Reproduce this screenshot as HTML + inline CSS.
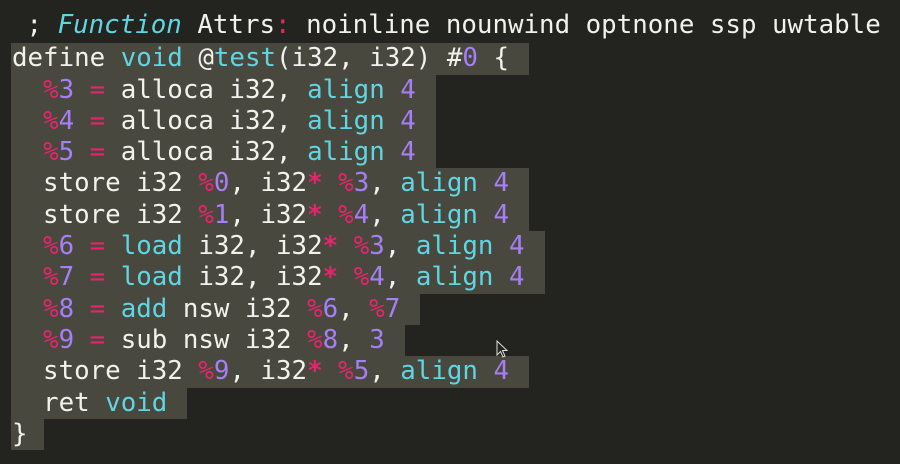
<!DOCTYPE html>
<html><head><style>
body{margin:0;width:900px;height:464px;background:#23231f;overflow:hidden;}
pre{margin:0;position:absolute;left:11px;top:10px;font-family:"DejaVu Sans Mono","Liberation Mono",monospace;font-size:25.8px;line-height:31.3px;color:#f2f2ec;}
.l{display:block;height:31.3px;}
.s{display:inline-block;height:31.3px;vertical-align:top;background:#48483f;padding:0 20px 0 1px;}
.c{color:#5fd6e2}.p{color:#e8246e}.v{color:#a67ff5}.i{font-style:italic}.b{font-weight:bold}
</style></head><body>
<pre><span class="l"> ; <span class="c i">Function</span> Attrs<span class="p">:</span> noinline nounwind optnone ssp uwtable</span><span class="l" style="margin-top:2px"><span class="s">define <span class="c">void</span> @<span class="c">test</span>(i32, i32) #<span class="v">0</span> {</span></span><span class="l"><span class="s">  <span class="p">%</span><span class="v">3</span> <span class="p">=</span> alloca i32, <span class="c">align</span> <span class="v">4</span></span></span><span class="l"><span class="s">  <span class="p">%</span><span class="v">4</span> <span class="p">=</span> alloca i32, <span class="c">align</span> <span class="v">4</span></span></span><span class="l"><span class="s">  <span class="p">%</span><span class="v">5</span> <span class="p">=</span> alloca i32, <span class="c">align</span> <span class="v">4</span></span></span><span class="l"><span class="s">  store i32 <span class="p">%</span><span class="v">0</span>, i32<span class="p b">*</span> <span class="p">%</span><span class="v">3</span>, <span class="c">align</span> <span class="v">4</span></span></span><span class="l"><span class="s">  store i32 <span class="p">%</span><span class="v">1</span>, i32<span class="p b">*</span> <span class="p">%</span><span class="v">4</span>, <span class="c">align</span> <span class="v">4</span></span></span><span class="l"><span class="s">  <span class="p">%</span><span class="v">6</span> <span class="p">=</span> <span class="c">load</span> i32, i32<span class="p b">*</span> <span class="p">%</span><span class="v">3</span>, <span class="c">align</span> <span class="v">4</span></span></span><span class="l"><span class="s">  <span class="p">%</span><span class="v">7</span> <span class="p">=</span> <span class="c">load</span> i32, i32<span class="p b">*</span> <span class="p">%</span><span class="v">4</span>, <span class="c">align</span> <span class="v">4</span></span></span><span class="l"><span class="s">  <span class="p">%</span><span class="v">8</span> <span class="p">=</span> <span class="c">add</span> nsw i32 <span class="p">%</span><span class="v">6</span>, <span class="p">%</span><span class="v">7</span></span></span><span class="l"><span class="s">  <span class="p">%</span><span class="v">9</span> <span class="p">=</span> sub nsw i32 <span class="p">%</span><span class="v">8</span>, <span class="v">3</span></span></span><span class="l"><span class="s">  store i32 <span class="p">%</span><span class="v">9</span>, i32<span class="p b">*</span> <span class="p">%</span><span class="v">5</span>, <span class="c">align</span> <span class="v">4</span></span></span><span class="l"><span class="s">  ret <span class="c">void</span></span></span><span class="l"><span class="s" style="padding-right:16px">}</span></span></pre>
<svg style="position:absolute;left:496px;top:340px" width="14" height="20" viewBox="0 0 14 20"><path d="M1 1 L1 15 L4.5 11.5 L7 17 L9 16 L6.5 10.5 L11 10.5 Z" fill="#23231f" stroke="#ddd" stroke-width="1"/></svg>
</body></html>
